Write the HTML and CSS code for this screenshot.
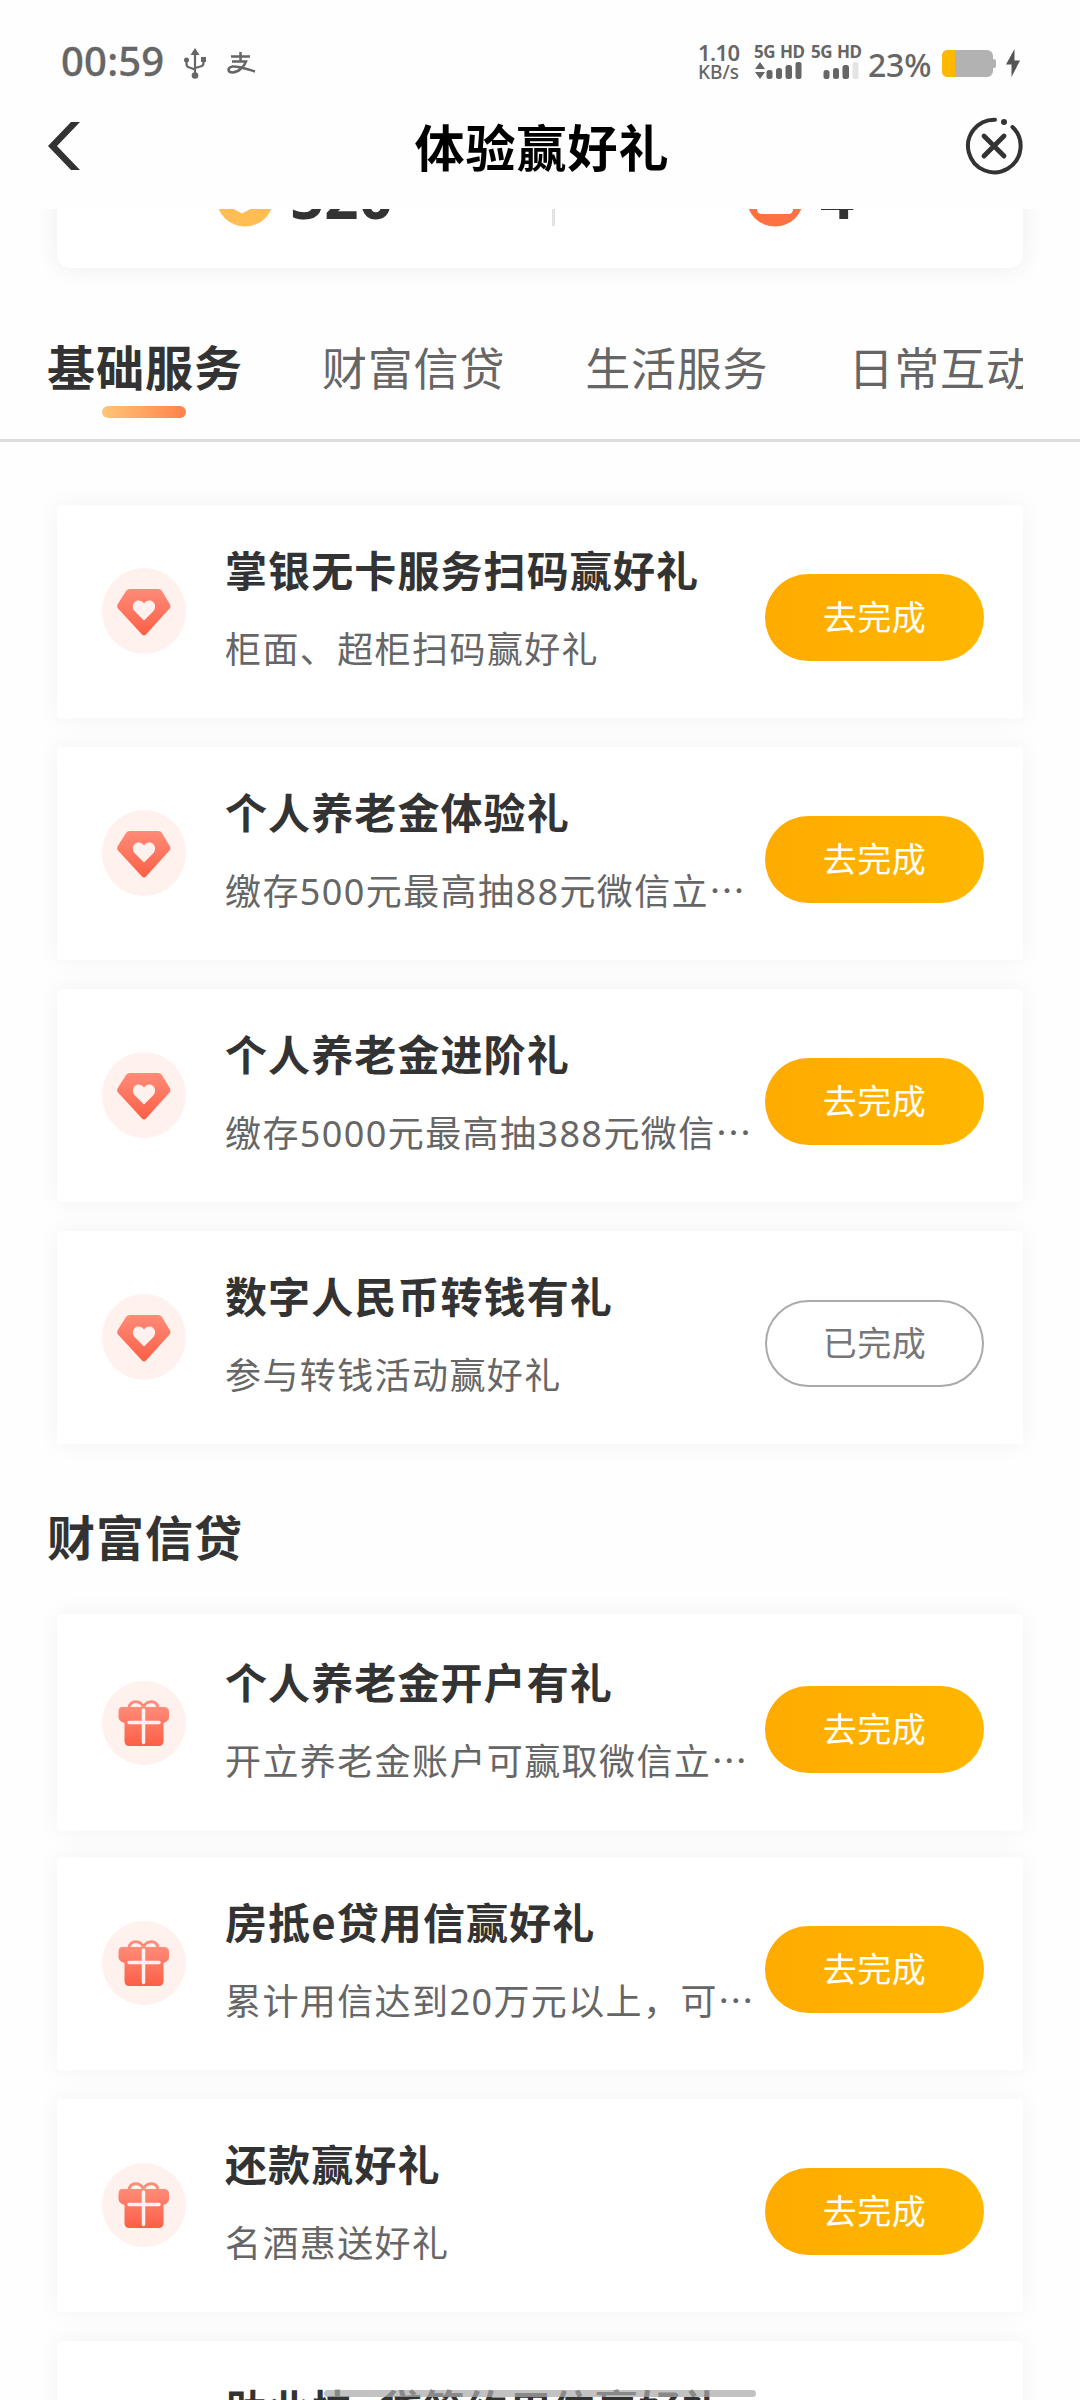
FILE: index.html
```html
<!DOCTYPE html>
<html lang="zh-CN">
<head>
<meta charset="utf-8">
<title>体验赢好礼</title>
<link rel="stylesheet" href="styles.css">
</head>
<body>
<svg class="defs" width="0" height="0">
  <defs>
    <linearGradient id="coral" x1="0" y1="0" x2="0" y2="1"><stop offset="0" stop-color="#ff8b78"/><stop offset="1" stop-color="#fb5f45"/></linearGradient>
    <symbol id="gem" viewBox="0 0 84 86">
      <ellipse cx="42" cy="43" rx="42" ry="43" fill="#fff1ee"/>
      <path d="M27.500 21h29q2 0 3.500 2l8 13.500q1 2-.5 4L44 66.500q-2 2-4 0L16 40.500q-1.500-2-.5-4L24 23q1.500-2 3.500-2z" fill="url(#coral)"/>
      <path d="M42 52.500 33 43.500C29 39.500 31 32.500 36.500 32.500q3.500 0 5.500 3 2-3 5.500-3C53 32.500 55 39.500 51 43.500z" fill="#fff1ee"/>
    </symbol>
    <symbol id="gift" viewBox="0 0 84 84">
      <circle cx="42" cy="42" r="42" fill="#fff1ee"/>
      <path d="M27 27.500c0-9 13-9 14.500-.5 1.500-8.500 14.500-8.500 14.500.5" fill="none" stroke="#ff8b78" stroke-width="3"/>
      <path d="M20 26h42q5 0 5 5v5q0 4-5.500 6v18q0 5-5 5h-29q-5 0-5-5V42q-6-2-6-6v-5q0-5 3.500-5z" fill="url(#coral)"/>
      <path d="M41.500 29v32.500M27 41.500h30" stroke="#fff1ee" stroke-width="3.500" stroke-linecap="round"/>
    </symbol>
  </defs>
</svg>
<div class="screen">
  <header class="status">
    <div class="status-left">
      <span class="clock">00:59</span>
      <svg class="usb" width="22" height="31" viewBox="0 0 22 31"><path d="M11 4v22M2.500 13v3q0 3 3 3.500L11 21.500M19.500 11v4q0 3-3 3.500L11 20" fill="none" stroke="#666" stroke-width="2.200"/><path d="M11 0l4.500 7h-9zM17 9h5v5h-5z" fill="#666"/><circle cx="2.500" cy="12" r="2.500" fill="#666"/><circle cx="11" cy="27.500" r="3.300" fill="#666"/></svg>
      <svg class="pay" width="29" height="22" viewBox="0 0 29 22"><path d="M4 4.500h19M13.500 0v9M5 9.500h14C17 15 11 20.500 5.500 20.500c-5 0-5.500-5 0-6C12 14 20 17 28 19.500" fill="none" stroke="#666" stroke-width="2.500"/></svg>
    </div>
    <div class="status-right">
      <div class="speed"><b>1.10</b><span>KB/s</span></div>
      <div class="sim"><b>5G HD</b><svg width="48" height="17" viewBox="0 0 48 17"><path d="M6 0l5 7H1zM1 10h10l-5 7z" fill="#666"/><rect x="12.500" y="8" width="6" height="9" rx="2.500" fill="#666"/><rect x="22" y="6" width="6" height="11" rx="2.500" fill="#666"/><rect x="31.500" y="3" width="6.500" height="14" rx="2.500" fill="#666"/><rect x="41.500" y="0" width="6" height="17" rx="2" fill="#666"/></svg></div>
      <div class="sim"><b>5G HD</b><svg width="48" height="17" viewBox="0 0 48 17"><rect x="12.500" y="8" width="6" height="9" rx="2.500" fill="#666"/><rect x="22" y="6" width="6" height="11" rx="2.500" fill="#666"/><rect x="31.500" y="3" width="6.500" height="14" rx="2.500" fill="#666"/><rect x="41.500" y="0" width="6" height="17" rx="2" fill="#e4e4e4"/></svg></div>
      <span class="percent">23%</span>
      <svg class="battery" width="54" height="27" viewBox="0 0 54 27"><rect width="51" height="27" rx="6" fill="#b2b2b2"/><path d="M6 0h7v27H6q-6 0-6-6V6q0-6 6-6z" fill="#ffb800"/><path d="M51 9q3 0 3 2v5q0 2-3 2z" fill="#b2b2b2"/></svg>
      <svg class="bolt" width="14" height="28" viewBox="0 0 14 28"><path d="M8.500 0 0 15.500h5.500V28L14 11.500H8.500z" fill="#555"/></svg>
    </div>
  </header>
  <nav class="titlebar">
    <svg width="32" height="48" viewBox="0 0 32 48"><path d="M23 0h9L9 24l23 24h-9L0 24z" fill="#333"/></svg>
    <h1>体验赢好礼</h1>
    <svg width="58" height="58" viewBox="0 0 58 58"><path d="M30 2.700A26.300 26.300 0 1 0 47.500 10" fill="none" stroke="#333" stroke-width="4" stroke-linecap="round"/><circle cx="39" cy="5" r="3" fill="#333"/><path d="M19 19l20 20M39 19 19 39" stroke="#333" stroke-width="4.800" stroke-linecap="round"/></svg>
  </nav>
  <section class="stats-view">
    <div class="stats">
      <div class="stat coins"><svg width="58" height="58" viewBox="0 0 58 58"><circle cx="29" cy="29" r="28.500" fill="#ffbd54"/><path d="M14 38 26 44.500 38 38" fill="#fff"/></svg><b>520</b></div>
      <i class="split"></i>
      <div class="stat coupons"><svg width="58" height="58" viewBox="0 0 58 58"><circle cx="29" cy="29" r="28.500" fill="#ff7043"/><path d="M11 36v4q0 5 5 5h26q5 0 5-5v-4z" fill="#fff"/></svg><b>4</b></div>
    </div>
  </section>
  <section class="tabs">
    <div class="tab active">基础服务</div>
    <div class="tab">财富信贷</div>
    <div class="tab">生活服务</div>
    <div class="tab">日常互动</div>
  </section>
  <main>
    <div class="list">
      <article class="card"><svg class="icon"><use href="#gem"/></svg><div class="text"><h3>掌银无卡服务扫码赢好礼</h3><p>柜面、超柜扫码赢好礼</p></div><button class="go">去完成</button></article>
      <article class="card"><svg class="icon"><use href="#gem"/></svg><div class="text"><h3>个人养老金体验礼</h3><p>缴存<span class="num">500</span>元最高抽<span class="num">88</span>元微信立…</p></div><button class="go">去完成</button></article>
      <article class="card"><svg class="icon"><use href="#gem"/></svg><div class="text"><h3>个人养老金进阶礼</h3><p>缴存<span class="num">5000</span>元最高抽<span class="num">388</span>元微信…</p></div><button class="go">去完成</button></article>
      <article class="card"><svg class="icon"><use href="#gem"/></svg><div class="text"><h3>数字人民币转钱有礼</h3><p>参与转钱活动赢好礼</p></div><button class="go done">已完成</button></article>
    </div>
    <h2>财富信贷</h2>
    <div class="list">
      <article class="card lead"><svg class="icon"><use href="#gift"/></svg><div class="text"><h3>个人养老金开户有礼</h3><p>开立养老金账户可赢取微信立…</p></div><button class="go">去完成</button></article>
      <article class="card"><svg class="icon"><use href="#gift"/></svg><div class="text"><h3>房抵e贷用信赢好礼</h3><p>累计用信达到<span class="num">20</span>万元以上，可…</p></div><button class="go">去完成</button></article>
      <article class="card"><svg class="icon"><use href="#gift"/></svg><div class="text"><h3>还款赢好礼</h3><p>名酒惠送好礼</p></div><button class="go">去完成</button></article>
      <article class="card last"><svg class="icon"><use href="#gift"/></svg><div class="text"><h3>助业快e贷签约用信赢好礼</h3></div></article>
    </div>
  </main>
  <div class="home-bar"></div>
</div>
</body>
</html>
```
FILE: styles.css
```css
* { box-sizing: border-box; margin: 0; padding: 0; }
body { background: #fefefe; font-family: "Noto Sans CJK SC", sans-serif; color: #333; }
.defs { position: absolute; }
.screen { position: relative; width: 1080px; height: 2400px; overflow: hidden; background: #fefefe; }

.status { height: 100px; padding: 0 60px 0 61px; display: flex; justify-content: space-between; color: #666; font-family: "Noto Sans", sans-serif; }
.status-left, .status-right { display: flex; align-items: flex-start; }
.clock { font-size: 40px; font-weight: 500; line-height: 54px; margin-top: 34px; letter-spacing: .2px; -webkit-text-stroke: .3px #666; }
.usb { margin: 48px 0 0 20px; }
.pay { margin: 52px 0 0 21px; }
.speed { display: flex; flex-direction: column; width: 44px; margin: 41px 12px 0 0; white-space: nowrap; }
.speed b { font-size: 22px; font-weight: 600; line-height: 22px; letter-spacing: -.6px; }
.speed span { font-size: 19px; font-weight: 500; line-height: 22px; margin-top: -2px; }
.sim { width: 48px; margin: 43px 9px 0 0; display: flex; flex-direction: column; }
.sim b { font-size: 17px; line-height: 17px; height: 19px; white-space: nowrap; letter-spacing: -.5px; word-spacing: 1px; }
.percent { width: 64px; margin: 43px 10px 0 0; font-size: 32px; font-weight: 500; line-height: 44px; letter-spacing: -.2px; }
.battery { margin: 50px 10px 0 0; }
.bolt { margin-top: 49px; }

.titlebar { height: 109px; padding: 15px 57px 0 48px; display: flex; justify-content: space-between; align-items: flex-start; }
.titlebar h1 { font-size: 50px; line-height: 60px; letter-spacing: 1px; margin-left: 39px; color: #000; font-weight: 700; }
.titlebar svg:first-child { margin-top: 7px; }
.titlebar svg:last-child { margin-top: 2px; }

.stats-view { height: 97px; margin: 0 21px; padding: 0 36px; overflow: hidden; }
.stats { height: 160px; margin-top: -101px; border-radius: 14px; background: #fff; box-shadow: 0 0 24px rgba(0,0,0,.07); display: flex; }
.stat { width: 495px; display: flex; padding: 61px 0 0 159px; gap: 16px; }
.stat b { font-family: "Noto Sans", sans-serif; font-size: 60px; line-height: 60px; margin-top: -3px; }
.split { flex: none; width: 3px; height: 60px; margin-top: 58px; background: #e3e3e3; }
.coupons { width: 468px; padding-left: 191px; }

.tabs { height: 133px; padding: 26px 0 0 47px; margin-right: 57px; display: flex; gap: 80px; overflow: hidden; white-space: nowrap; }
.tab { flex: none; font-size: 45px; line-height: 69px; letter-spacing: .8px; color: #666; }
.tab.active { font-size: 48px; line-height: 66px; letter-spacing: 1px; font-weight: 700; color: #333; width: 195px; }
.tab.active::after { content: ""; display: block; width: 84px; height: 12px; margin: 8px 0 0 55px; border-radius: 6px; background: linear-gradient(90deg, #ffc678, #ff824c); }

main { border-top: 3px solid #ddd; padding-top: 63px; }
.list { padding: 0 57px; display: flex; flex-direction: column; gap: 29px; }
.card { height: 213px; background: #fff; border-radius: 4px; box-shadow: 0 0 24px rgba(0,0,0,.05); display: flex; align-items: flex-start; padding: 0 39px 0 45px; }
.lead { height: 217px; padding-top: 3px; margin-bottom: -3px; }
.last { padding-top: 3px; }
.icon { flex: none; width: 84px; height: 86px; margin-top: 63px; }
.text { flex: none; width: 540px; margin-left: 39px; margin-top: 34px; white-space: nowrap; }
.text h3 { font-size: 42px; line-height: 60px; letter-spacing: 1.100px; font-weight: 700; }
.text p { font-size: 36px; line-height: 52px; margin-top: 22px; letter-spacing: 1.400px; color: #666; }
.num { font-family: "Noto Sans", sans-serif; }
.go { flex: none; width: 219px; height: 87px; margin-top: 69px; padding-bottom: 3px; border: 0; border-radius: 44px; background: linear-gradient(90deg, #ffab00, #ffb700); color: #fff; font: 34px/80px "Noto Sans CJK SC", sans-serif; letter-spacing: .5px; }
.done { background: #fff; border: 2px solid #aaa; color: #777; line-height: 78px; }
h2 { font-size: 48px; line-height: 70px; letter-spacing: 1px; padding-left: 47px; margin: 56px 0 44px; }
.home-bar { position: absolute; left: 324px; top: 2390px; width: 432px; height: 7px; border-radius: 4px; background: rgba(170,170,170,.72); }
```
